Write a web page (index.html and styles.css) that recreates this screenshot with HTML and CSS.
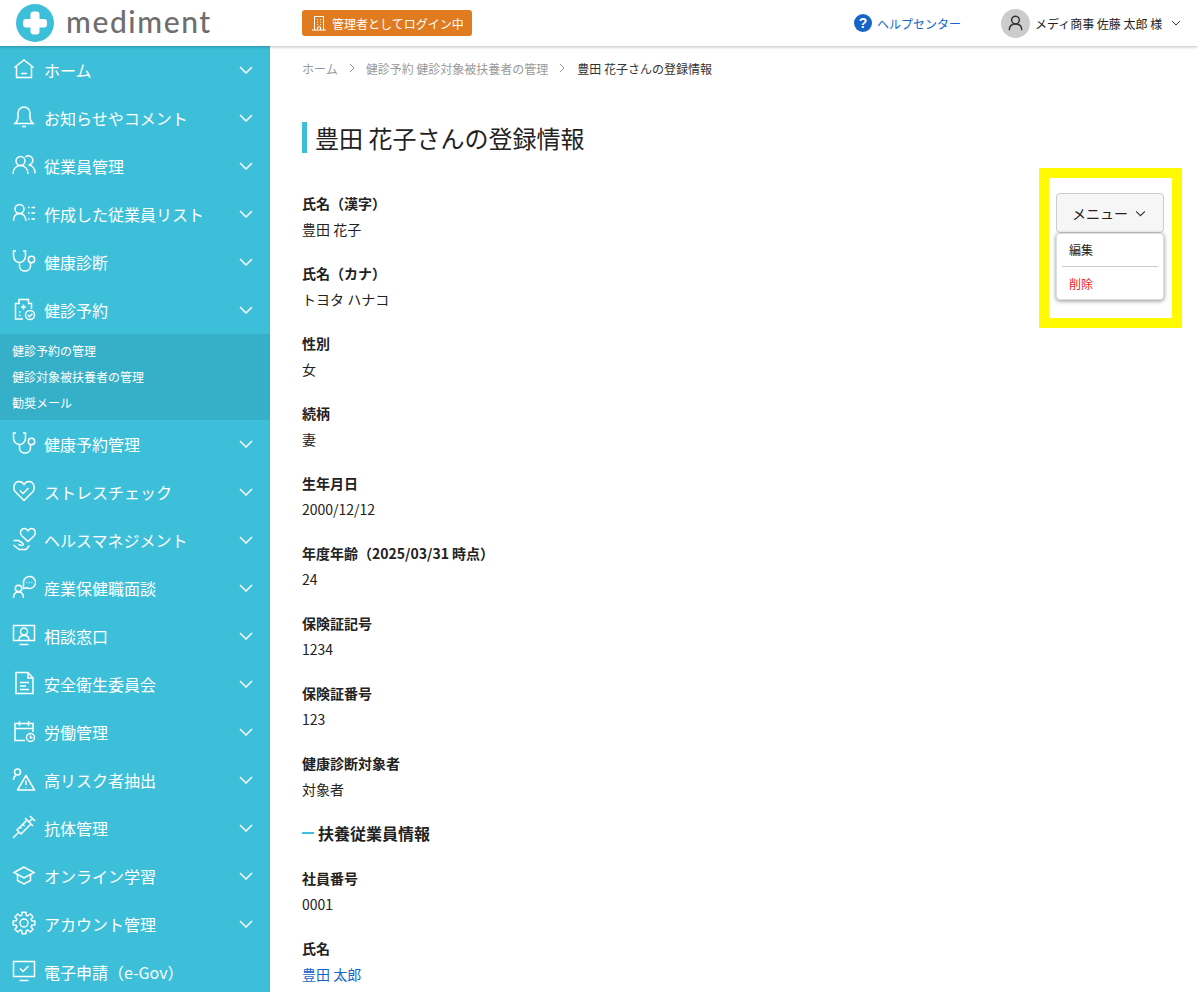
FILE: index.html
```html
<!DOCTYPE html>
<html lang="ja">
<head>
    <meta charset="UTF-8">
    <title>豊田 花子さんの登録情報</title>
    <link rel="stylesheet" href="styles.css">
</head>
<body>
    <header class="topbar">
        <div class="logo">
            <svg class="logo-mark" viewBox="0 0 38 38"><circle cx="19" cy="19" r="19" fill="#3dbfd9"/><path d="M14.500 10.500a3 3 0 0 1 3-3h3a3 3 0 0 1 3 3v4.500h4.500a3 3 0 0 1 3 3v2.500a3 3 0 0 1-3 3h-4.500v4a3 3 0 0 1-3 3h-3a3 3 0 0 1-3-3v-4h-4.500a3 3 0 0 1-3-3v-2.500a3 3 0 0 1 3-3h4.500z" fill="#fff"/></svg>
            <span class="logo-text">mediment</span>
        </div>
        <div class="admin-badge">
            <svg class="admin-icon" viewBox="0 0 16 16" fill="none" stroke="#fff" stroke-width="1"><path d="M1 15h14M3.500 15V1.500h9V15M6.500 15v-3h3v3M6 4.500h1M9 4.500h1M6 7h1M9 7h1M6 9.500h1M9 9.500h1"/></svg>
            管理者としてログイン中
        </div>
        <a class="help-link">
            <span class="help-icon">?</span>
            ヘルプセンター
        </a>
        <div class="user-menu">
            <span class="avatar">
                <svg viewBox="0 0 30 30" fill="none" stroke="#333" stroke-width="1.500"><circle cx="15" cy="11.500" r="4"/><path d="M8.500 22c0-4.500 2.500-6.500 6.500-6.500s6.500 2 6.500 6.500"/></svg>
            </span>
            <span class="user-name">メディ商事 佐藤 太郎 様</span>
            <svg class="user-caret" viewBox="0 0 10 6" fill="none" stroke="#333" stroke-width="1"><path d="M1 1l4 4 4-4"/></svg>
        </div>
    </header>

    <div class="layout">
        <nav class="sidebar">
            <a class="nav-item">
                <svg class="nav-icon" viewBox="0 0 24 24"><path d="M2.500 10.500L12 3l9.500 7.500M4.500 9.500V20.500h15V9.500M9 16.500h6"/></svg>
                <span class="nav-label">ホーム</span>
                <svg class="nav-caret" viewBox="0 0 14 8"><path d="M1 1l6 6 6-6"/></svg>
            </a>
            <a class="nav-item">
                <svg class="nav-icon" viewBox="0 0 24 24"><path d="M3 18.500c2-1.500 3-3 3-6.500V8a6 6 0 0 1 12 0v4c0 3.500 1 5 3 6.500zM10 21.500h4"/></svg>
                <span class="nav-label">お知らせやコメント</span>
                <svg class="nav-caret" viewBox="0 0 14 8"><path d="M1 1l6 6 6-6"/></svg>
            </a>
            <a class="nav-item">
                <svg class="nav-icon" viewBox="0 0 24 24"><circle cx="8.500" cy="8" r="4.500"/><path d="M1 21c0-5 3-8.500 7.500-8.500S16 16 16 21"/><path d="M13.500 3.800a4.500 4.500 0 1 1 3 8c4 .5 6.500 4 6.500 8.500"/></svg>
                <span class="nav-label">従業員管理</span>
                <svg class="nav-caret" viewBox="0 0 14 8"><path d="M1 1l6 6 6-6"/></svg>
            </a>
            <a class="nav-item">
                <svg class="nav-icon" viewBox="0 0 24 24"><circle cx="7.500" cy="8" r="4.500"/><path d="M1.500 20c0-4.500 2-7.500 6-7.500s6 2.500 6.500 7.500M16 6.500h1.500M19.500 6.500H23M16 12h1.500M19.500 12H23M16 18h1.500M19.500 18H23"/></svg>
                <span class="nav-label">作成した従業員リスト</span>
                <svg class="nav-caret" viewBox="0 0 14 8"><path d="M1 1l6 6 6-6"/></svg>
            </a>
            <a class="nav-item">
                <svg class="nav-icon" viewBox="0 0 24 24"><path d="M4 2H1.500v5c0 4 3 6.500 6 6.500s6-2.500 6-6.500V2H11M7.500 13.500V17c0 3 2.500 5 5.500 5s5.500-2 5.500-5v-3.500"/><circle cx="19.500" cy="10.500" r="3.200"/></svg>
                <span class="nav-label">健康診断</span>
                <svg class="nav-caret" viewBox="0 0 14 8"><path d="M1 1l6 6 6-6"/></svg>
            </a>
            <a class="nav-item">
                <svg class="nav-icon" viewBox="0 0 24 24"><path d="M11 22H3.500V6.500h3.500V2.500h9.500v4h3V12M11.500 7.500v5M9 10h5M7 15h1.500M7 18.500h1.500"/><circle cx="18" cy="18" r="4.500"/><path d="M15.800 18l1.700 1.700 2.800-3"/></svg>
                <span class="nav-label">健診予約</span>
                <svg class="nav-caret" viewBox="0 0 14 8"><path d="M1 1l6 6 6-6"/></svg>
            </a>
            <div class="nav-sub">
                <a class="nav-sub-item">健診予約の管理</a>
                <a class="nav-sub-item">健診対象被扶養者の管理</a>
                <a class="nav-sub-item">勧奨メール</a>
            </div>
            <a class="nav-item">
                <svg class="nav-icon" viewBox="0 0 24 24"><path d="M4 2H1.500v5c0 4 3 6.500 6 6.500s6-2.500 6-6.500V2H11M7.500 13.500V17c0 3 2.500 5 5.500 5s5.500-2 5.500-5v-3.500"/><circle cx="19.500" cy="10.500" r="3.200"/></svg>
                <span class="nav-label">健康予約管理</span>
                <svg class="nav-caret" viewBox="0 0 14 8"><path d="M1 1l6 6 6-6"/></svg>
            </a>
            <a class="nav-item">
                <svg class="nav-icon" viewBox="0 0 24 24"><path d="M12 21.500L3.500 13C0 9 2.500 2.500 7 2.500c2.500 0 4 1.200 5 3 1-1.800 2.500-3 5-3 4.500 0 7 6.500 3.500 10.500z"/><path d="M8 11.500l3 3 5.500-5.500"/></svg>
                <span class="nav-label">ストレスチェック</span>
                <svg class="nav-caret" viewBox="0 0 14 8"><path d="M1 1l6 6 6-6"/></svg>
            </a>
            <a class="nav-item">
                <svg class="nav-icon" viewBox="0 0 24 24"><path d="M16 14.500l-6-5.500C7 6 9 1.500 12.500 1.500c1.800 0 2.800 1 3.500 2.200.7-1.200 1.700-2.200 3.500-2.200 3.500 0 5 4.500 2.500 7.500z"/><path d="M1.500 13.500h5l4 2.500c1.500 1 .5 3-1 2.500l-3-1M1.500 18l5.500 4.500h7l3.500-4"/></svg>
                <span class="nav-label">ヘルスマネジメント</span>
                <svg class="nav-caret" viewBox="0 0 14 8"><path d="M1 1l6 6 6-6"/></svg>
            </a>
            <a class="nav-item">
                <svg class="nav-icon" viewBox="0 0 24 24"><circle cx="6.500" cy="13.500" r="3.200"/><path d="M1.500 23c0-4 1.500-6 5-6s5 2 5 6"/><path d="M11.500 7.500a6 6 0 1 1 3 5.200l-3 .8z"/><path d="M14.500 7.500h.8M17 7.500h.8M19.500 7.500h.8"/></svg>
                <span class="nav-label">産業保健職面談</span>
                <svg class="nav-caret" viewBox="0 0 14 8"><path d="M1 1l6 6 6-6"/></svg>
            </a>
            <a class="nav-item">
                <svg class="nav-icon" viewBox="0 0 24 24"><path d="M1.500 2.500h21v15h-21zM7.500 21.500h9M7 17c0-3 2-4.500 5-4.500s5 1.500 5 4.500"/><circle cx="12" cy="8.500" r="3.500"/></svg>
                <span class="nav-label">相談窓口</span>
                <svg class="nav-caret" viewBox="0 0 14 8"><path d="M1 1l6 6 6-6"/></svg>
            </a>
            <a class="nav-item">
                <svg class="nav-icon" viewBox="0 0 24 24"><path d="M4 1.500h12l5 5.500v15.500H4zM16 1.500V7h5M8 11.500h9M8 15h6M8 18.500h9"/></svg>
                <span class="nav-label">安全衛生委員会</span>
                <svg class="nav-caret" viewBox="0 0 14 8"><path d="M1 1l6 6 6-6"/></svg>
            </a>
            <a class="nav-item">
                <svg class="nav-icon" viewBox="0 0 24 24"><path d="M13 21.500H3V4.500h18V13M3 9.500h18M7.500 2v5M16.500 2v5"/><circle cx="18.500" cy="18.500" r="4"/><path d="M18.500 16.500v2.200h2"/></svg>
                <span class="nav-label">労働管理</span>
                <svg class="nav-caret" viewBox="0 0 14 8"><path d="M1 1l6 6 6-6"/></svg>
            </a>
            <a class="nav-item">
                <svg class="nav-icon" viewBox="0 0 24 24"><circle cx="5.500" cy="5" r="3"/><path d="M1.500 13c0-2.500.8-4 2.500-4.500"/><path stroke-linejoin="round" d="M14 8.500l8.500 14.500h-17zM14 13.500v4.500M14 20v.5"/></svg>
                <span class="nav-label">高リスク者抽出</span>
                <svg class="nav-caret" viewBox="0 0 14 8"><path d="M1 1l6 6 6-6"/></svg>
            </a>
            <a class="nav-item">
                <svg class="nav-icon" viewBox="0 0 24 24"><path d="M1 23l5.500-5.500M5 15l4 4 10-10-4-4zM13 3l8 8M18 1l5 5M20.500 3.500L17.500 6.500M8 12l1.500 1.500M11 9.500l1.500 1.500"/></svg>
                <span class="nav-label">抗体管理</span>
                <svg class="nav-caret" viewBox="0 0 14 8"><path d="M1 1l6 6 6-6"/></svg>
            </a>
            <a class="nav-item">
                <svg class="nav-icon" viewBox="0 0 24 24"><path d="M12 4L2 9.500 12 15l10-5.500zM5.500 11.500v6l6.500 3.500 6.500-3.500v-6"/></svg>
                <span class="nav-label">オンライン学習</span>
                <svg class="nav-caret" viewBox="0 0 14 8"><path d="M1 1l6 6 6-6"/></svg>
            </a>
            <a class="nav-item">
                <svg class="nav-icon" viewBox="0 0 24 24"><circle cx="12" cy="12" r="4"/><path stroke-linejoin="round" d="M9.660 4.350L10.090 1.170H13.910L14.340 4.350L15.750 4.940L18.310 2.990L21.010 5.690L19.060 8.250L19.650 9.660L22.830 10.090V13.910L19.650 14.340L19.060 15.750L21.010 18.310L18.310 21.010L15.750 19.060L14.340 19.650L13.910 22.830H10.090L9.660 19.650L8.250 19.060L5.690 21.010L2.990 18.310L4.940 15.750L4.350 14.340L1.170 13.910V10.090L4.350 9.660L4.940 8.250L2.990 5.690L5.690 2.990L8.250 4.940z"/></svg>
                <span class="nav-label">アカウント管理</span>
                <svg class="nav-caret" viewBox="0 0 14 8"><path d="M1 1l6 6 6-6"/></svg>
            </a>
            <a class="nav-item">
                <svg class="nav-icon" viewBox="0 0 24 24"><path d="M1.500 2.500h21v15h-21zM7.500 21.500h9M8 9.500l3 3 5.500-5.500"/></svg>
                <span class="nav-label">電子申請（e-Gov）</span>
            </a>
        </nav>

        <main class="content">
            <div class="breadcrumb">
                <a>ホーム</a>
                <svg class="crumb-sep" viewBox="0 0 6 10"><path d="M1 1l4 4-4 4"/></svg>
                <a>健診予約 健診対象被扶養者の管理</a>
                <svg class="crumb-sep" viewBox="0 0 6 10"><path d="M1 1l4 4-4 4"/></svg>
                <span class="crumb-current">豊田 花子さんの登録情報</span>
            </div>

            <h1 class="page-title">豊田 花子さんの登録情報</h1>

            <div class="menu-highlight">
                <button class="menu-button">
                    メニュー
                    <svg class="menu-caret" viewBox="0 0 10 6"><path d="M1 1l4 4 4-4"/></svg>
                </button>
                <div class="menu-list">
                    <a class="menu-item">編集</a>
                    <a class="menu-item menu-item-danger">削除</a>
                </div>
            </div>

            <dl class="field"><dt>氏名（漢字）</dt><dd>豊田 花子</dd></dl>
            <dl class="field"><dt>氏名（カナ）</dt><dd>トヨタ ハナコ</dd></dl>
            <dl class="field"><dt>性別</dt><dd>女</dd></dl>
            <dl class="field"><dt>続柄</dt><dd>妻</dd></dl>
            <dl class="field"><dt>生年月日</dt><dd>2000/12/12</dd></dl>
            <dl class="field"><dt>年度年齢（2025/03/31 時点）</dt><dd>24</dd></dl>
            <dl class="field"><dt>保険証記号</dt><dd>1234</dd></dl>
            <dl class="field"><dt>保険証番号</dt><dd>123</dd></dl>
            <dl class="field"><dt>健康診断対象者</dt><dd>対象者</dd></dl>

            <h2 class="section-title">扶養従業員情報</h2>

            <dl class="field"><dt>社員番号</dt><dd>0001</dd></dl>
            <dl class="field"><dt>氏名</dt><dd><a class="link">豊田 太郎</a></dd></dl>
        </main>
    </div>
</body>
</html>
```

FILE: styles.css
```css
* {
    box-sizing: border-box;
}

html,
body {
    height: 100%;
}

body {
    margin: 0;
    overflow: hidden;
    background-color: white;
    color: #222;
    font-family: "Noto Sans CJK JP", "Noto Sans", sans-serif;
    font-size: 14px;
}

.topbar {
    position: relative;
    z-index: 2;
    display: flex;
    align-items: center;
    height: 46px;
    padding: 0 16px;
    background-color: white;
    box-shadow: 0 1px 3px rgba(0, 0, 0, 0.25);
}

.logo {
    display: flex;
    align-items: center;
    gap: 12px;
    width: 286px;
}

.logo-mark {
    width: 38px;
    height: 38px;
}

.logo-text {
    padding-bottom: 4px;
    color: #6e6e6e;
    font-family: "Lato", sans-serif;
    font-size: 30px;
    font-weight: 500;
    letter-spacing: 1.6px;
    line-height: 44px;
}

.admin-badge {
    display: flex;
    align-items: center;
    gap: 5px;
    width: 170px;
    height: 26px;
    padding-left: 9px;
    border-radius: 3px;
    background-color: #e07b1f;
    color: white;
    font-size: 12px;
}

.admin-icon {
    width: 16px;
    height: 16px;
}

.help-link {
    display: flex;
    align-items: center;
    gap: 5px;
    margin-left: 382px;
    color: #1565c8;
    font-size: 12px;
}

.help-icon {
    width: 18px;
    height: 18px;
    border-radius: 50%;
    background-color: #1565c8;
    color: white;
    font-family: "Liberation Sans", sans-serif;
    font-size: 14px;
    font-weight: 700;
    line-height: 18px;
    text-align: center;
}

.user-menu {
    display: flex;
    align-items: center;
    margin-left: 40px;
}

.avatar {
    width: 29px;
    height: 29px;
    margin-right: 5px;
    border-radius: 50%;
    background-color: #ccc;
}

.avatar svg {
    display: block;
}

.user-name {
    font-size: 12px;
    color: #222;
}

.user-caret {
    width: 10px;
    height: 6px;
    margin-left: 9px;
}

.layout {
    display: flex;
    height: calc(100% - 46px);
}

.sidebar {
    flex: 0 0 270px;
    overflow: hidden;
    background-color: #3dbfd9;
    color: white;
}

.nav-item {
    display: flex;
    align-items: center;
    height: 48px;
    padding-left: 12px;
    font-size: 16px;
}

.nav-icon {
    flex: 0 0 24px;
    width: 24px;
    height: 24px;
    margin-top: -2px;
    fill: none;
    stroke: white;
    stroke-width: 1.500;
}

.nav-label {
    flex: 1;
    margin-left: 8px;
}

.nav-caret {
    width: 14px;
    height: 8px;
    margin-right: 17px;
    fill: none;
    stroke: white;
    stroke-width: 1.500;
}

.nav-sub {
    display: flex;
    flex-direction: column;
    justify-content: center;
    height: 86px;
    padding-left: 12px;
    background-color: #36afc8;
}

.nav-sub-item {
    height: 26px;
    font-size: 12px;
    line-height: 26px;
}

.content {
    position: relative;
    flex: 1;
    padding: 0 32px;
}

.breadcrumb {
    display: flex;
    align-items: center;
    height: 44px;
    color: #999;
    font-size: 12px;
}

.crumb-sep {
    width: 6px;
    height: 10px;
    margin: 0 11px;
    fill: none;
    stroke: #999;
    stroke-width: 1;
}

.crumb-current {
    margin-left: 1px;
    color: #333;
}

.page-title {
    height: 31px;
    margin: 32px 0 0;
    padding-left: 8px;
    border-left: 5px solid #3dbfd9;
    font-size: 24px;
    font-weight: 400;
    line-height: 31px;
}

.field {
    height: 70px;
    margin: 0;
}

.page-title + .menu-highlight + .field {
    margin-top: 38px;
}

.field dt {
    font-weight: 700;
    line-height: 24px;
}

.field dd {
    margin: 2px 0 0;
    line-height: 24px;
}

.link {
    color: #1565c8;
}

.section-title {
    display: flex;
    align-items: center;
    height: 24px;
    margin: 0 0 21px;
    font-size: 16px;
    font-weight: 700;
}

.section-title::before {
    content: "";
    width: 12px;
    height: 2px;
    margin-right: 4px;
    background-color: #3dbfd9;
}

.menu-highlight {
    position: absolute;
    top: 122px;
    left: 769px;
    width: 143px;
    height: 160px;
    padding: 15px 7px 0;
    border: 10px solid #fffa00;
    background-color: white;
}

.menu-button {
    display: flex;
    align-items: center;
    justify-content: center;
    gap: 7px;
    width: 108px;
    height: 40px;
    padding: 0 2px 0 0;
    border: 1px solid #ccc;
    border-radius: 4px;
    background-color: #f6f6f6;
    color: #222;
    font-family: inherit;
    font-size: 14px;
}

.menu-caret {
    width: 11px;
    height: 7px;
    fill: none;
    stroke: #333;
    stroke-width: 1;
}

.menu-list {
    width: 108px;
    height: 67px;
    padding: 0 5px;
    border: 1px solid #ddd;
    border-radius: 4px;
    background-color: white;
    box-shadow: 0 1px 4px rgba(0, 0, 0, 0.45);
}

.menu-item {
    display: block;
    height: 32px;
    padding-left: 7px;
    font-size: 12px;
    line-height: 32px;
}

.menu-item-danger {
    height: 33px;
    border-top: 1px solid #ccc;
    color: #e8261c;
    line-height: 34px;
}
```
